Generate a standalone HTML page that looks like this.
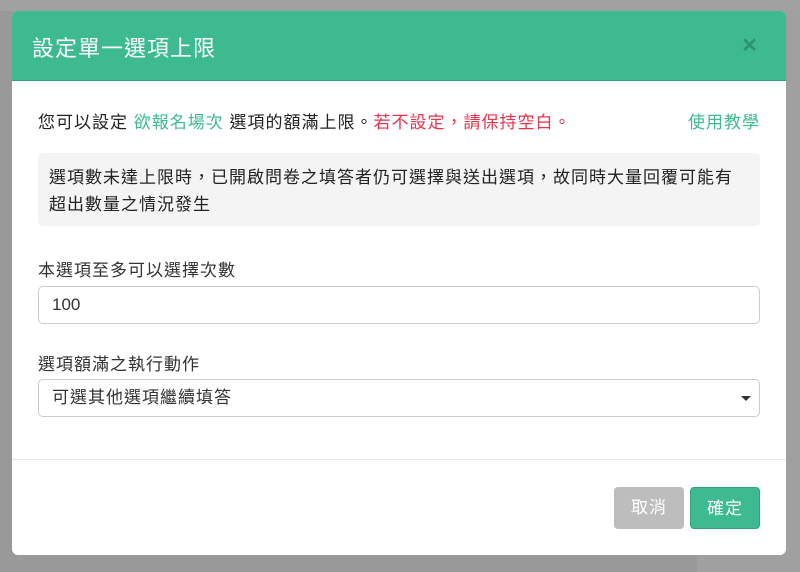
<!DOCTYPE html>
<html><head><meta charset="utf-8"><style>
*{box-sizing:border-box;margin:0;padding:0}
body{width:800px;height:572px;overflow:hidden;background:#999;font-family:"Liberation Sans","Noto Sans CJK TC",sans-serif;position:relative;color:#222}
.bg{position:absolute}
.modal{position:absolute;left:12px;top:11px;width:774px;height:544px;background:#fff;border-radius:6px;overflow:hidden}
.hd{height:70px;background:#3dba8f;border-bottom:1px solid #2fa57c;position:relative}
.hd h1{position:absolute;left:20px;top:20px;font-size:22px;font-weight:normal;color:#fff;letter-spacing:1px}
.x{position:absolute;right:28px;top:22px;font-size:20px;font-weight:bold;color:#2c8a68;opacity:.8}
.t{font-size:17px;letter-spacing:1px}
.p1{position:absolute;left:26px;top:97px;color:#222}
.g{color:#3dba8f}.r{color:#e8334a}
.tut{position:absolute;right:26px;top:97px;color:#3dba8f}
.note{position:absolute;left:26px;top:142px;width:722px;height:73px;background:#f4f4f4;border-radius:5px;padding:11px 11px;line-height:27px;color:#222}
.lab{position:absolute;left:26px;color:#333}
.inp{position:absolute;left:26px;width:722px;height:38px;border:1px solid #ccc;border-radius:5px;padding:0 13px;line-height:36px;color:#333}
.caret{position:absolute;right:8px;top:16px;width:0;height:0;border-left:5px solid transparent;border-right:5px solid transparent;border-top:5px solid #333}
.hr{position:absolute;left:0;right:0;top:448px;border-top:1px solid #e8e8e8}
.btn{position:absolute;top:476px;height:42px;border-radius:4px;color:#fff;text-align:center;line-height:42px}
</style></head><body>
<div class="bg" style="left:697px;top:0;width:103px;height:572px;background:#a0a0a0"></div>
<div class="bg" style="left:0;top:0;width:800px;height:11px;background:#a1a1a1"></div>
<div class="modal">
<div class="hd"><h1>設定單一選項上限</h1><div class="x">✕</div></div>
<div class="p1 t">您可以設定 <span class="g">欲報名場次</span> 選項的額滿上限。<span class="r">若不設定，請保持空白。</span></div>
<div class="tut t">使用教學</div>
<div class="note t">選項數未達上限時，已開啟問卷之填答者仍可選擇與送出選項，故同時大量回覆可能有超出數量之情況發生</div>
<div class="lab t" style="top:245px">本選項至多可以選擇次數</div>
<div class="inp t" style="top:275px;letter-spacing:0">100</div>
<div class="lab t" style="top:339px">選項額滿之執行動作</div>
<div class="inp t" style="top:368px">可選其他選項繼續填答<div class="caret"></div></div>
<div class="hr"></div>
<div class="btn t" style="left:602px;width:70px;background:#bdbdbd">取消</div>
<div class="btn t" style="left:678px;width:70px;background:#3dba8f;border:1px solid #2fa57c">確定</div>
</div>
</body></html>
